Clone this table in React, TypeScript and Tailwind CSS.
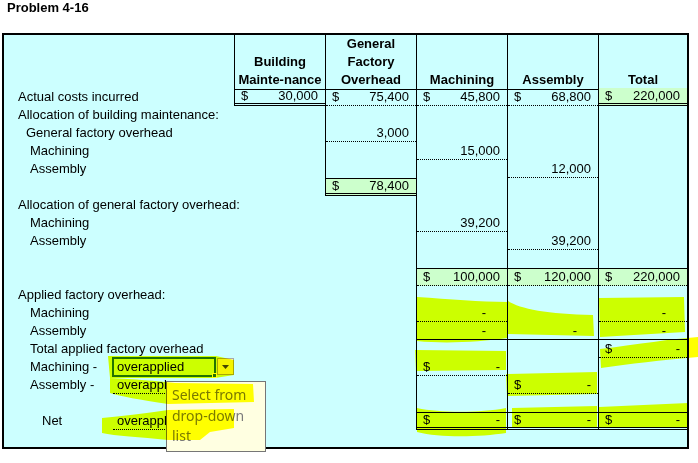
import React from 'react';

type Cell = {
  d?: boolean;
  v?: string;
  dash?: 'p' | 'a';
  g?: boolean;
  b?: 'dot' | 'dbl' | 'solid';
  t?: boolean;
};

const E: Cell = {};

function ValueCell({ c, left }: { c: Cell; left: boolean }) {
  const bottom =
    c.b === 'dot'
      ? 'border-b border-dotted border-black'
      : c.b === 'dbl'
      ? 'border-b-[3px] border-double border-black'
      : c.b === 'solid'
      ? 'border-b border-solid border-black'
      : '';
  return (
    <div className={`h-[18px] flex ${left ? 'border-l border-black' : ''} ${c.t ? 'border-t border-black' : ''}`}>
      <div
        className={`flex-1 flex items-center justify-between pl-[6px] ${c.dash === 'p' ? 'pr-[21px]' : 'pr-[7px]'} ${c.g ? 'bg-[#ccffcc]' : ''} ${bottom}`}
      >
        <span>{c.d ? '$' : ''}</span>
        <span>{c.dash ? '-' : c.v}</span>
      </div>
    </div>
  );
}

type Row = { label?: React.ReactNode; pl?: string; cells: Cell[] };

const rows: Row[] = [
  { label: 'Actual costs incurred', pl: 'pl-[14px]', cells: [
    { d: true, v: '30,000', b: 'dbl' },
    { d: true, v: '75,400', b: 'dot' },
    { d: true, v: '45,800', b: 'dot' },
    { d: true, v: '68,800', b: 'dot' },
    { d: true, v: '220,000', b: 'dbl', g: true },
  ] },
  { label: 'Allocation of building maintenance:', pl: 'pl-[14px]', cells: [E, E, E, E, E] },
  { label: 'General factory overhead', pl: 'pl-[22px]', cells: [E, { v: '3,000', b: 'dot' }, E, E, E] },
  { label: 'Machining', pl: 'pl-[26px]', cells: [E, E, { v: '15,000', b: 'dot' }, E, E] },
  { label: 'Assembly', pl: 'pl-[26px]', cells: [E, E, E, { v: '12,000', b: 'dot' }, E] },
  { label: '', cells: [E, { d: true, v: '78,400', g: true, t: true, b: 'dbl' }, E, E, E] },
  { label: 'Allocation of general factory overhead:', pl: 'pl-[14px]', cells: [E, E, E, E, E] },
  { label: 'Machining', pl: 'pl-[26px]', cells: [E, E, { v: '39,200', b: 'dot' }, E, E] },
  { label: 'Assembly', pl: 'pl-[26px]', cells: [E, E, E, { v: '39,200', b: 'dot' }, E] },
  { label: '', cells: [E, E, E, E, E] },
  { label: '', cells: [E, E,
    { d: true, v: '100,000', g: true, t: true, b: 'dot' },
    { d: true, v: '120,000', g: true, t: true, b: 'dot' },
    { d: true, v: '220,000', g: true, t: true, b: 'dot' },
  ] },
  { label: 'Applied factory overhead:', pl: 'pl-[14px]', cells: [E, E, E, E, E] },
  { label: 'Machining', pl: 'pl-[26px]', cells: [E, E, { dash: 'p', b: 'dot' }, E, { dash: 'p', b: 'dot' }] },
  { label: 'Assembly', pl: 'pl-[26px]', cells: [E, E, { dash: 'p', b: 'solid' }, { dash: 'p', b: 'solid' }, { dash: 'p', b: 'solid' }] },
  { label: 'Total applied factory overhead', pl: 'pl-[26px]', cells: [E, E, E, E, { d: true, dash: 'a', b: 'dot' }] },
  { label: 'dd-m', cells: [E, E, { d: true, dash: 'a', b: 'dot' }, E, E] },
  { label: 'dd-a', cells: [E, E, E, { d: true, dash: 'a', b: 'dot' }, E] },
  { label: '', cells: [E, E, E, E, E] },
  { label: 'dd-n', cells: [E, E,
    { d: true, dash: 'a', t: true, b: 'dbl' },
    { d: true, dash: 'a', t: true, b: 'dbl' },
    { d: true, dash: 'a', t: true, b: 'dbl' },
  ] },
];

function LabelCell({ r }: { r: Row }) {
  if (r.label === 'dd-m' || r.label === 'dd-a' || r.label === 'dd-n') {
    const name = r.label === 'dd-m' ? 'Machining -' : r.label === 'dd-a' ? 'Assembly -' : 'Net';
    const clipped = r.label !== 'dd-m';
    return (
      <div className="h-[18px] flex items-stretch">
        <div className={`w-[109px] shrink-0 flex items-center ${r.label === 'dd-n' ? 'pl-[38px]' : 'pl-[26px]'}`}>{name}</div>
        <div className="w-[102px] shrink-0 flex items-center pl-[4px] border-b border-dotted border-black">
          {clipped ? (
            <span className="block w-[49px] overflow-hidden whitespace-nowrap">overapplied</span>
          ) : (
            <span>overapplied</span>
          )}
        </div>
      </div>
    );
  }
  return <div className={`h-[18px] flex items-center whitespace-nowrap ${r.pl ?? ''}`}>{r.label}</div>;
}

const headers: string[][] = [
  ['Building', 'Mainte-nance'],
  ['General', 'Factory', 'Overhead'],
  ['Machining'],
  ['Assembly'],
  ['Total'],
];

export default function App() {
  return (
    <div
      className="relative w-[698px] h-[463px] bg-white overflow-hidden text-black text-[13px] leading-[18px]"
      style={{ fontFamily: '"Liberation Sans", Arial, sans-serif' }}
    >
      <div className="h-[33px] pl-[7px] font-bold leading-[16px]">Problem 4-16</div>
      <div className="ml-[2px] w-[687px] border-2 border-black bg-[#ccffff]">
        <div className="grid grid-cols-[230px_91px_91px_91px_91px_89px] h-[53px]">
          <div />
          {headers.map((h, i) => (
            <div key={i} className="border-l border-b border-black flex flex-col justify-end items-center font-bold leading-[18px] whitespace-nowrap">
              {h.map((l) => (
                <div key={l}>{l}</div>
              ))}
            </div>
          ))}
        </div>
        {rows.map((r, ri) => {
          const rowNo = ri + 1;
          return (
            <div key={ri} className="grid grid-cols-[230px_91px_91px_91px_91px_89px] h-[18px]">
              <LabelCell r={r} />
              {r.cells.map((c, ci) => (
                <ValueCell
                  key={ci}
                  c={c}
                  left={ci === 0 ? rowNo <= 1 : ci === 1 ? rowNo <= 6 : true}
                />
              ))}
            </div>
          );
        })}
        <div className="h-[17px]" />
      </div>

      {/* selected dropdown cell */}
      <div className="absolute left-[112px] top-[357px] w-[104px] h-[20px] border-2 border-[#217346]" />
      <div className="absolute left-[212px] top-[373px] w-[5px] h-[5px] bg-[#217346] border border-white" />
      <div className="absolute left-[217px] top-[358px] w-[17px] h-[17px] bg-[#f4f4f4] border border-[#a9a9a9] flex items-center justify-center">
        <svg width="7" height="4" viewBox="0 0 7 4">
          <path d="M0 0 L7 0 L3.5 4 Z" fill="#444" />
        </svg>
      </div>

      {/* tooltip */}
      <div
        className="absolute left-[166px] top-[381px] w-[100px] h-[71px] bg-[#ffffe1] border border-[#767676] pl-[5px] pt-[3px] text-[14px] leading-[20.5px] text-[#7a7a7a]"
        style={{ fontFamily: '"Noto Sans", "Open Sans", sans-serif' }}
      >
        <div>Select from</div>
        <div>drop-down</div>
        <div>list</div>
      </div>

      {/* highlighter strokes */}
      <svg
        className="absolute left-0 top-0 pointer-events-none mix-blend-multiply"
        width="698"
        height="463"
        viewBox="0 0 698 463"
      >
        <g fill="#ffff00">
          <path d="M417 297 C450 299 480 302 507 302 L507 338 C480 342 445 344 417 341 Z" />
          <path d="M508 301 C520 309 548 314 593 315 L594 336 L508 334 Z" />
          <path d="M599 298 L684 297 L685 332 L600 337 Z" />
          <path d="M600 349 C640 344 670 339 698 337 L698 357 C660 360 630 364 601 368 Z" />
          <path d="M415 350 L506 351 L506 370 L416 371 Z" />
          <path d="M506 374 L597 372 L597 394 L507 396 Z" />
          <path d="M417 408 C440 413 480 413 506 408 L506 433 C480 437 440 438 417 432 Z" />
          <path d="M512 408 L597 406 L597 427 L512 428 Z" />
          <path d="M599 407 L688 403 L688 427 L599 428 Z" />
          <path d="M108 356 L216 356 L234 360 L234 375 L215 378 L110 378 Z" />
          <path d="M110 378 C135 379 155 381 175 383 L253 384 L254 402 L168 404 C140 400 120 396 110 393 Z" />
          <path d="M102 418 C130 415 150 413 168 410 L234 409 L234 428 L210 432 L200 440 L168 440 C140 437 115 436 102 433 Z" />
        </g>
      </svg>
    </div>
  );
}
